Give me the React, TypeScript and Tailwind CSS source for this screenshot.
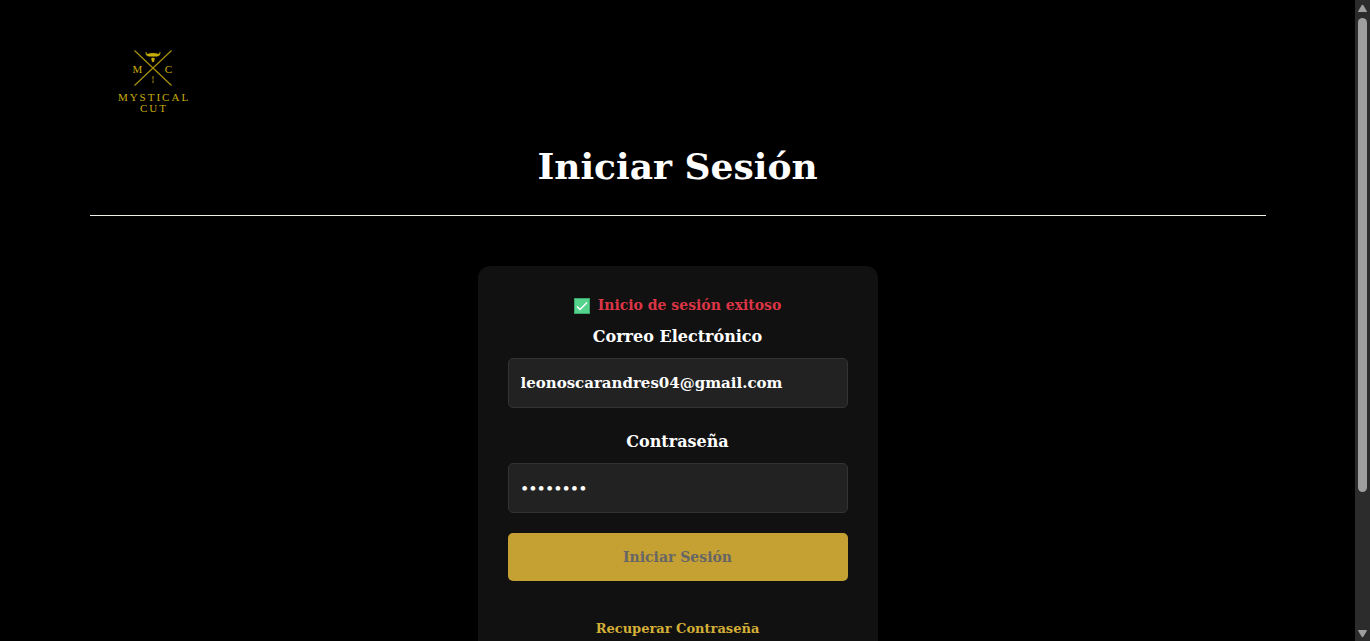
import { useState } from "react";

function Logo() {
  return (
    <svg viewBox="0 0 100 90" className="h-[90px] w-[100px]" role="img" aria-label="Mystical Cut">
      <g stroke="#a8910f" strokeWidth="1.200" fill="none">
        <path d="M31.500 15.500 68.500 50.500M68.500 15.500 31.500 50.500" />
        <path d="M50 41v3.500M50 45.500v2.500" strokeWidth="1" />
      </g>
      <path
        d="M43 17c-.5 3 .8 4.300 4 4.300h6c3.200 0 4.500-1.300 4-4.300.2 1.800-1 2.200-3 1.900-1.500-.8-6.500-.8-8 0-2 .3-3.200-.1-3-1.900ZM48.700 23h2.600v2l-.8 2h-1l-.8-2Z"
        fill="#c9ad08"
        stroke="#c9ad08"
        strokeWidth=".5"
      />
      <g fill="#c9ad0c" fontFamily="'Liberation Serif', serif" fontWeight="400" textAnchor="middle">
        <text x="34.500" y="37.500" fontSize="11">M</text>
        <text x="65.500" y="37.500" fontSize="11">C</text>
        <text x="51" y="66" fontSize="11" letterSpacing="2">MYSTICAL</text>
        <text x="51" y="76.500" fontSize="11" letterSpacing="2">CUT</text>
      </g>
    </svg>
  );
}

function CheckMark() {
  return (
    <svg viewBox="0 0 16 16" className="size-4" role="img" aria-label="Correcto">
      <rect x=".5" y=".5" width="15" height="15" fill="#55d28c" stroke="#3da66b" />
      <path d="m3 8.500 3 3 7-7" fill="none" stroke="#fff" strokeWidth="1.500" />
    </svg>
  );
}

function ScrollBar() {
  return (
    <div aria-hidden="true" className="flex w-[15px] shrink-0 flex-col items-center bg-[#2c2c2c]">
      <svg viewBox="0 0 15 18" className="h-[18px] w-[15px]">
        <path d="M3 11.500 6.500 5.500Q7.500 4 8.500 5.500L12 11.500Q12 12 11.500 12h-8Q3 12 3 11.500Z" fill="#9f9f9f" />
      </svg>
      <div className="w-[9px] grow-[474] rounded-full bg-[#9f9f9f]" />
      <div className="grow-[132]" />
      <svg viewBox="0 0 15 17" className="h-[17px] w-[15px]">
        <path d="M3 6.500 6.500 12.500Q7.500 14 8.500 12.500L12 6.500Q12 6 11.500 6h-8Q3 6 3 6.500Z" fill="#9f9f9f" />
      </svg>
    </div>
  );
}

const labelClass = "mb-2 block text-center text-[16px] leading-[27px]";
const inputClass =
  "mb-5 block h-[50px] w-full rounded-[5px] border border-[#333] bg-[#222] px-3 text-white outline-none";

export default function App() {
  const [email, setEmail] = useState("leonoscarandres04@gmail.com");
  const [password, setPassword] = useState("12345678");

  return (
    <div className="flex h-screen overflow-hidden bg-black font-['DejaVu_Serif',serif] font-bold text-white">
      <div className="min-w-0 grow overflow-hidden px-5">
        <div className="mx-auto max-w-[1176px]">
          <header className="border-b border-[#f0f0e8] pt-[35px] pb-6">
            <a href="#inicio" className="ml-[13px] block w-fit">
              <Logo />
            </a>
            <h1 className="mt-4 text-center text-[36px] leading-[50px]">Iniciar Sesión</h1>
          </header>
          <main className="mx-auto mt-[50px] max-w-[400px] rounded-xl bg-[#111] p-[30px]">
            <form onSubmit={(e) => e.preventDefault()}>
              <p className="flex items-center justify-center gap-2 text-[14px] leading-[19px] text-[#dc3545]">
                <CheckMark />
                Inicio de sesión exitoso
              </p>
              <label htmlFor="email" className={`mt-2 ${labelClass}`}>
                Correo Electrónico
              </label>
              <input
                id="email"
                type="email"
                value={email}
                onChange={(e) => setEmail(e.target.value)}
                className={`text-[15px] ${inputClass}`}
              />
              <label htmlFor="password" className={labelClass}>
                Contraseña
              </label>
              <input
                id="password"
                type="password"
                value={password}
                onChange={(e) => setPassword(e.target.value)}
                className={`text-[13px] ${inputClass}`}
              />
              <button
                type="submit"
                disabled
                className="h-12 w-full rounded-[5px] bg-[#c5a033] text-[14px] text-[#666]"
              >
                Iniciar Sesión
              </button>
            </form>
            <a href="#recuperar" className="mx-auto mt-9 block w-fit text-[13px] leading-6 text-[#d4af37]">
              Recuperar Contraseña
            </a>
          </main>
        </div>
      </div>
      <ScrollBar />
    </div>
  );
}
